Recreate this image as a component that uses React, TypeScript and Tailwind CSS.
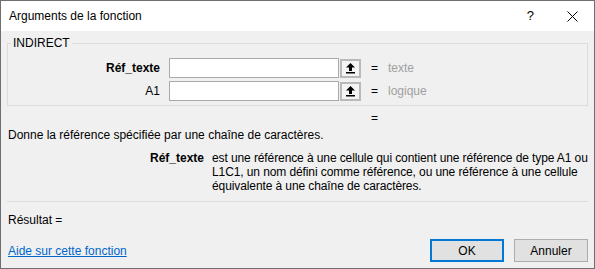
import type { ReactNode } from "react";

const font = {
  fontFamily: '"Liberation Sans", Arial, sans-serif',
};

function UploadIcon() {
  return (
    <svg width="11" height="12" viewBox="0 0 11 12">
      <path d="M5.5 1 L10 5.5 H7 V9 H4 V5.5 H1 Z" fill="#000" />
      <rect x="1" y="10" width="9" height="1.5" fill="#000" />
    </svg>
  );
}

function ArgRow({
  label,
  bold,
  hint,
}: {
  label: string;
  bold?: boolean;
  hint: string;
}) {
  return (
    <div className="flex items-center h-[20px]">
      <div
        className={
          bold
            ? "w-[152px] shrink-0 text-right font-bold text-[12px] text-black"
            : "w-[152px] shrink-0 text-right text-[12px] text-black"
        }
      >
        {label}
      </div>

      <div className="ml-[9px] w-[170px] h-[20px] bg-white border border-[#a9a9a9]" />

      <button className="ml-[1px] w-[21px] h-[19px] flex items-center justify-center bg-[#f4f4f4] border-2 border-[#b9b9b9]">
        <UploadIcon />
      </button>

      <span className="ml-[10px] text-[12px] text-black">=</span>

      <span className="ml-[10px] text-[12px] text-[#a0a0a0]">
        {hint}
      </span>
    </div>
  );
}

function DialogButton({
  primary,
  children,
}: {
  primary?: boolean;
  children: ReactNode;
}) {
  return (
    <button
      className={
        primary
          ? "w-[74px] h-[23px] bg-[#e1e1e1] border-2 border-[#0078d7] text-[12px] text-black"
          : "w-[74px] h-[23px] bg-[#e1e1e1] border border-[#adadad] text-[12px] text-black"
      }
    >
      {children}
    </button>
  );
}

export default function App() {
  return (
    <div
      style={font}
      className="w-[595px] h-[269px] bg-[#f0f0f0] border border-[#6f6f6f] flex flex-col overflow-hidden"
    >
      {/* title bar */}
      <div className="h-[30px] bg-white flex items-center pl-[8px] pr-[16px] shrink-0">
        <span className="text-[12px] text-black leading-[14px]">
          Arguments de la fonction
        </span>

        <span className="ml-auto text-[13px] text-black">?</span>

        <svg
          className="ml-[33px]"
          width="11"
          height="11"
          viewBox="0 0 11 11"
        >
          <path
            d="M0.5 0.5 L10.5 10.5 M10.5 0.5 L0.5 10.5"
            stroke="#000"
            strokeWidth="1"
          />
        </svg>
      </div>

      <div className="px-[6px] flex flex-col leading-[14px]">
        {/* group box */}
        <fieldset className="mt-[5px] border border-[#dcdcdc] pb-[4px] pt-[8px] flex flex-col gap-[3px]">
          <legend className="ml-[3px] px-[2px] text-[12px] text-black leading-[14px]">
            INDIRECT
          </legend>

          <ArgRow label="Réf_texte" bold hint="texte" />

          <ArgRow label="A1" hint="logique" />
        </fieldset>

        <div className="mt-[5px] pl-[364px] text-[12px] text-black">
          =
        </div>

        <div className="mt-[3px] pl-[1px] text-[12px] text-black">
          Donne la référence spécifiée par une chaîne de caractères.
        </div>

        <div className="mt-[9px] flex">
          <div className="w-[197px] shrink-0 text-right font-bold text-[12px] text-black">
            Réf_texte
          </div>

          <div className="ml-[8px] text-[12px] text-black whitespace-nowrap tracking-[-0.1px]">
            est une référence à une cellule qui contient une référence de type A1 ou
            <br />
            L1C1, un nom défini comme référence, ou une référence à une cellule
            <br />
            équivalente à une chaîne de caractères.
          </div>
        </div>

        <div className="mt-[8px] h-[1px] bg-[#dcdcdc]" />

        <div className="mt-[11px] pl-[1px] text-[12px] text-black">
          Résultat =
        </div>

        <div className="mt-[12px] flex items-center">
          <a
            href="#"
            className="pl-[1px] text-[12px] text-[#0066cc] underline"
          >
            Aide sur cette fonction
          </a>

          <div className="ml-auto flex gap-[10px]">
            <DialogButton primary>OK</DialogButton>

            <DialogButton>Annuler</DialogButton>
          </div>
        </div>
      </div>
    </div>
  );
}
